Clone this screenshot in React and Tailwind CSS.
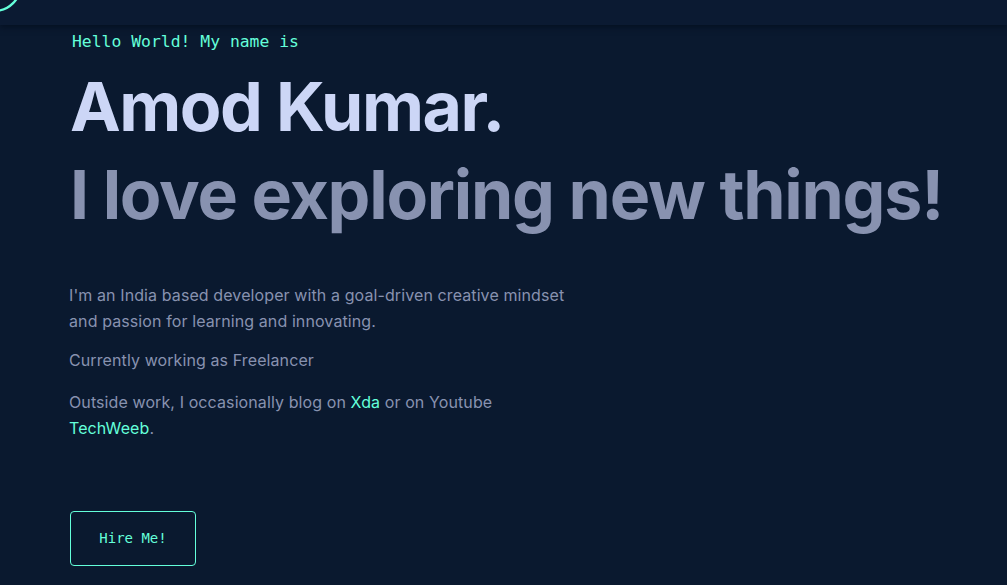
export default function App() {
  const mono = { fontFamily: "'DejaVu Sans Mono', 'Liberation Mono', monospace" };
  return (
    <div className="h-[585px] w-full bg-[#0a192f] overflow-hidden" style={{ fontFamily: "Inter, 'Noto Sans', sans-serif" }}>
      <header className="relative h-[25px] bg-[#0b1a32] shadow-[0_2px_6px_rgba(2,12,27,0.7)]">
        <svg className="absolute left-0 top-0" width="30" height="25" viewBox="0 0 30 25">
          <circle cx="-6" cy="-16" r="27" fill="none" stroke="#64ffda" strokeWidth="2.4" />
        </svg>
      </header>
      <section className="px-[70px] pt-[5px]">
        <h1 className="ml-[2px] text-[16.4px] leading-[24px] text-[#64ffda]" style={mono}>
          Hello World! My name is
        </h1>
        <h2 className="mt-[8px] whitespace-nowrap text-[68px] font-bold leading-[88px] tracking-[-1.5px] text-[#ccd6f6]">Amod Kumar.</h2>
        <h3 className="whitespace-nowrap text-[68px] font-bold leading-[88px] tracking-[-1.25px] text-[#8892b0]">I love exploring new things!</h3>
        <div className="-ml-px mt-[44px] max-w-[500px] text-[16px] leading-[26px] tracking-[0.1px] text-[#8892b0]">
          <p className="mb-[13px]">I'm an India based developer with a goal-driven creative mindset and passion for learning and innovating.</p>
          <p className="mb-[16px]">Currently working as Freelancer</p>
          <p>
            Outside work, I occasionally blog on <span className="text-[#64ffda]">Xda</span> or on Youtube <span className="text-[#64ffda]">TechWeeb</span>.
          </p>
        </div>
        <button className="mt-[70px] flex h-[55px] w-[126px] items-center justify-center rounded-[4px] border border-[#64ffda] text-[14px] text-[#64ffda]" style={mono}>
          Hire Me!
        </button>
      </section>
    </div>
  );
}
